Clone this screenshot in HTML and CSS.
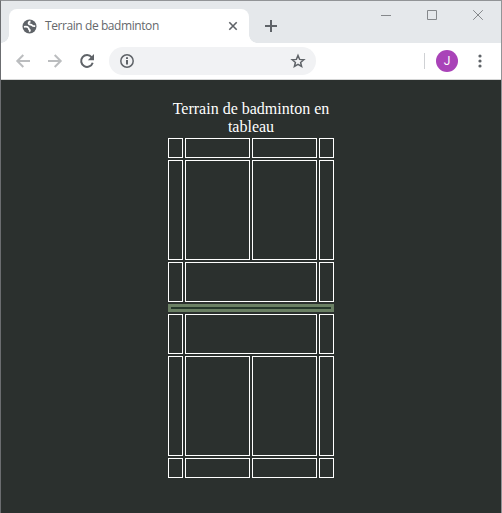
FILE: index.html
```html
<!DOCTYPE html>
<html lang="fr">
<head>
<meta charset="utf-8">
<title>Terrain de badminton</title>
<link rel="stylesheet" href="styles.css">
</head>
<body>
<div class="window">
  <header class="tabstrip">
    <div class="tab">
      <svg class="favicon" viewBox="0 0 15 15"><circle cx="7.500" cy="7.500" r="7"/><path class="land" d="M8.500 2.500C6.500 2.800 6.200 4.200 7 5c1.200.9 2.200.3 3 1.300.9 1.200 2 .9 3.200.9M2 7.800c1.800-.4 3.400-.3 4.200.7.900 1 .3 1.700 1.400 2.300.6.400.300 1.200-.4 1.900"/></svg>
      <span class="tab-title">Terrain de badminton</span>
      <svg class="tab-close" viewBox="0 0 8 8"><path d="M.3.3l7.400 7.400M7.700.3L.3 7.700"/></svg>
    </div>
    <svg class="new-tab" viewBox="0 0 12 12"><path d="M6 0v12M0 6h12"/></svg>
    <div class="controls">
      <svg viewBox="0 0 10 10"><path d="M0 5.500h10"/></svg>
      <svg viewBox="0 0 10 10"><path d="M.5.5h9v9h-9z"/></svg>
      <svg viewBox="0 0 10 10"><path d="M.2.2l9.600 9.600M9.800.2L.2 9.800"/></svg>
    </div>
  </header>
  <nav class="toolbar">
    <svg class="nav off" viewBox="0 0 16 16"><path d="M15 8H3M8.300 2L2.300 8l6 6"/></svg>
    <svg class="nav off" viewBox="0 0 16 16"><path d="M1 8h12M7.700 2l6 6-6 6"/></svg>
    <svg class="nav" viewBox="0 0 16 16"><path d="M12.700 4.300A5.900 5.900 0 1 0 13.700 9.700"/><path class="fill" d="M15 1v6.200H8.800z"/></svg>
    <div class="address">
      <svg class="info" viewBox="0 0 14 14"><circle cx="7" cy="7" r="6.200"/><path class="letter" d="M7 6v4.500M7 3.300v1.700"/></svg>
      <svg class="star" viewBox="0 0 14 14"><path d="M7 1.500l1.600 3.900 4.200.3-3.200 2.700 1 4.100L7 10.300l-3.600 2.200 1-4.100L1.200 5.700l4.200-.3z"/></svg>
    </div>
    <span class="divider"></span>
    <span class="avatar">J</span>
    <svg class="menu" viewBox="0 0 4 14"><circle cx="2" cy="2" r="1.600"/><circle cx="2" cy="7" r="1.600"/><circle cx="2" cy="12" r="1.600"/></svg>
  </nav>
  <main class="page">
    <h1 class="caption">Terrain de badminton en tableau</h1>
    <div class="court">
      <i></i><i></i><i></i><i></i>
      <i></i><i></i><i></i><i></i>
      <i></i><i class="wide"></i><i></i>
      <i class="net"></i>
      <i></i><i class="wide"></i><i></i>
      <i></i><i></i><i></i><i></i>
      <i></i><i></i><i></i><i></i>
    </div>
  </main>
</div>
</body>
</html>
```
FILE: styles.css
```css
* { box-sizing: border-box; }
body { margin: 0; }
svg { display: block; flex: none; overflow: visible; fill: none; }

.window {
  display: flex;
  flex-direction: column;
  width: 502px;
  height: 513px;
  overflow: hidden;
  border: 1px solid #929497;
  border-left-color: #6b6d70;
  border-bottom: 0;
  background: #fff;
}

.tabstrip {
  display: flex;
  height: 42px;
  padding: 8px 18px 0 8px;
  background: #e5e8eb;
}
.tab {
  position: relative;
  display: flex;
  align-items: center;
  width: 240px;
  height: 34px;
  padding: 0 12px 0 12.5px;
  border-radius: 8px 8px 0 0;
  background: #fff;
}
.tab::before,
.tab::after {
  content: "";
  position: absolute;
  bottom: 0;
  width: 8px;
  height: 8px;
}
.tab::before { left: -8px; background: radial-gradient(circle at 0 0, transparent 7.5px, #fff 8px); }
.tab::after { right: -8px; background: radial-gradient(circle at 100% 0, transparent 7.5px, #fff 8px); }
.favicon { width: 15px; height: 15px; fill: #5f6368; }
.land { fill: none; stroke: #fff; stroke-width: 1.800; }
.tab-title {
  flex: 1;
  margin-left: 8.5px;
  font: 12px/16px "Open Sans", "Noto Sans", sans-serif;
  letter-spacing: -0.42px;
  white-space: nowrap;
  color: #65686c;
}
.tab-close { width: 8px; height: 8px; stroke: #5f6368; stroke-width: 1.600; }
.new-tab { width: 12px; height: 12px; margin: 11px 0 0 16px; stroke: #5f6368; stroke-width: 2; }
.controls { display: flex; gap: 36px; margin: 1px 0 0 auto; }
.controls svg { width: 10px; height: 10px; stroke: #85888b; stroke-width: 1; }

.toolbar {
  display: flex;
  align-items: center;
  height: 37px;
  padding: 0 19px 1px 14px;
  border-bottom: 1px solid #d5d6d6;
}
.nav { width: 16px; height: 16px; margin-right: 16px; stroke: #5f6368; stroke-width: 2; }
.nav.off { stroke: #bbbdbf; }
.nav .fill { fill: #5f6368; stroke: none; }
.address {
  display: flex;
  align-items: center;
  justify-content: space-between;
  width: 207px;
  height: 28px;
  margin-left: -2px;
  padding: 0 11px;
  border-radius: 14px;
  background: #f1f2f4;
}
.address svg { width: 14px; height: 14px; stroke: #5f6368; stroke-width: 1.500; }
.address .letter { stroke-width: 2; }
.divider { width: 1px; height: 16px; margin-left: auto; background: #cfd1d4; }
.avatar {
  width: 22px;
  height: 22px;
  margin: 0 20px 0 11px;
  border-radius: 50%;
  background: #a943b8;
  color: #fff;
  font: 12px/22px Roboto, sans-serif;
  text-align: center;
}
.menu { width: 4px; height: 14px; fill: #5f6368; }

.page {
  flex: 1;
  padding-top: 20px;
  background: #2b302e;
}
.caption {
  width: 170px;
  margin: 0 auto 2px;
  color: #fff;
  font: 16px/18px "Liberation Serif", serif;
  text-align: center;
}
.court {
  display: grid;
  grid-template-columns: 15px 65px 65px 15px;
  grid-template-rows: 20px 100px 40px 8px 40px 100px 20px;
  gap: 2px;
  width: 166px;
  margin: 0 auto;
}
.court i { border: 1px solid #fff; }
.court .wide { grid-column: span 2; }
.court .net { grid-column: 1 / -1; border: 3px solid #6b8064; background: #25372b; }
```
